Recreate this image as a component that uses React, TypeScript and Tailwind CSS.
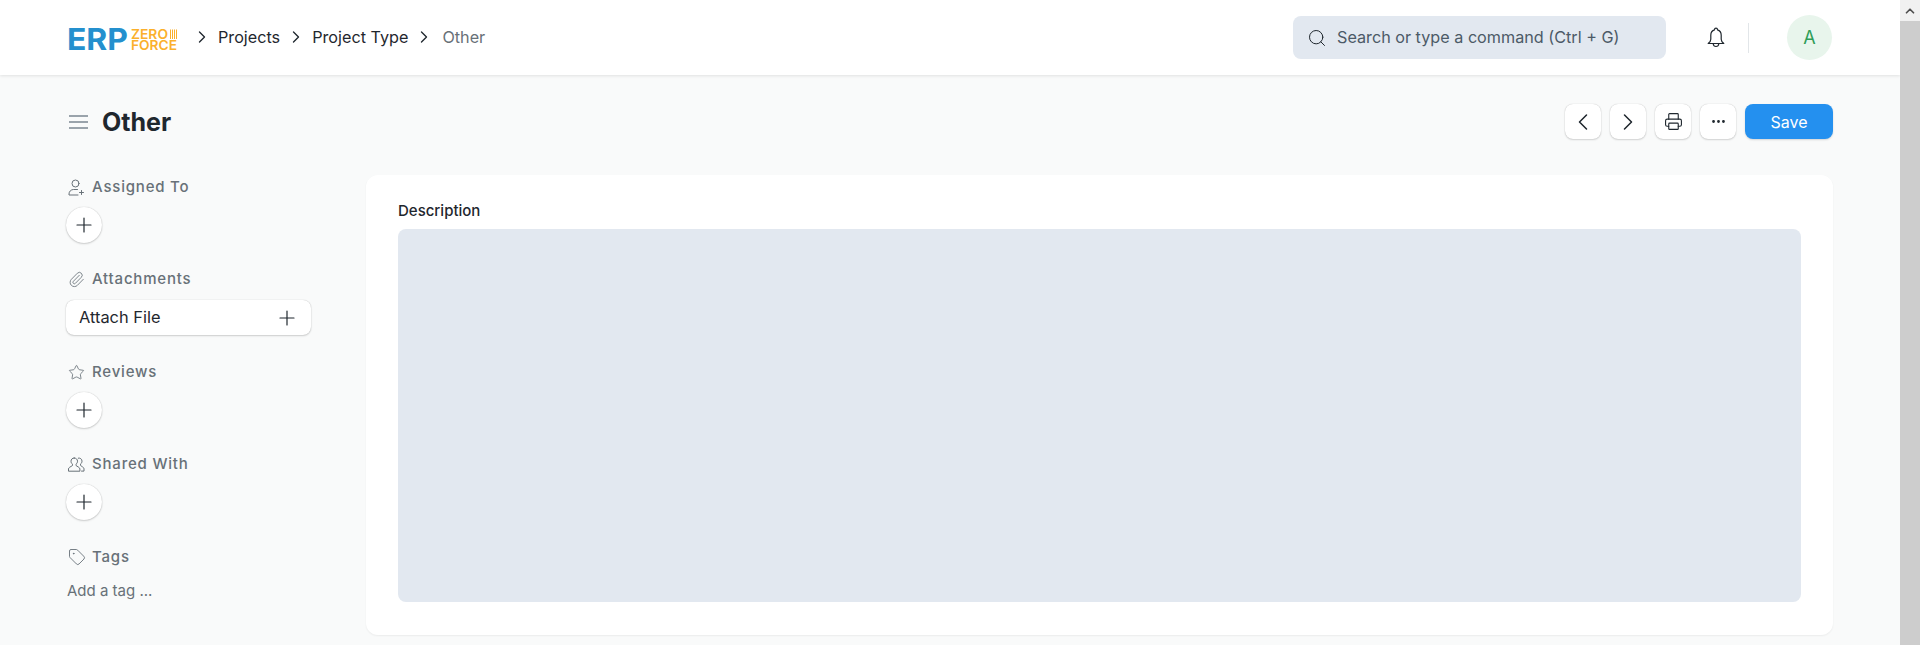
import { ChevronLeft, ChevronRight, Plus, Printer, Search, Ellipsis, Paperclip, Star, Tag, ChevronUp } from "lucide-react";
import type { ReactNode } from "react";

function Crumb() {
  return <ChevronRight size={20} strokeWidth={1.6} className="text-[#1f272e]" />;
}

function Label({ icon, text }: { icon: ReactNode; text: string }) {
  return (
    <div className="flex h-5 items-center text-[#687178]">
      <span className="ml-[2px] flex w-[24px] items-center">{icon}</span>
      <span className="text-[15px] font-medium tracking-[0.8px]">{text}</span>
    </div>
  );
}

function RoundAdd() {
  return (
    <div className="mt-[10px] flex h-9 w-9 items-center justify-center rounded-full bg-white shadow-[0_0_1px_rgba(0,0,0,0.25),0_1px_2px_rgba(0,0,0,0.16)]">
      <Plus size={24} strokeWidth={1.2} className="text-[#1f272e]" />
    </div>
  );
}

function ToolButton({ children }: { children: ReactNode }) {
  return (
    <div className="flex h-[35px] w-9 items-center justify-center rounded-lg bg-white text-[#1f272e] shadow-[0_0_1px_rgba(0,0,0,0.25),0_1px_2px_rgba(0,0,0,0.14)]">
      {children}
    </div>
  );
}

function Logo() {
  return (
    <svg width="108" height="42" viewBox="0 -9 108 42" className="mt-[5px] shrink-0 overflow-visible">
      <text x="-2" y="22" fontSize="30" fontWeight="700" fill="#2490ce" textLength="61" lengthAdjust="spacingAndGlyphs" fontFamily="Inter, sans-serif">ERP</text>
      <text x="62" y="11" fontSize="13.500" fontWeight="600" fill="#fbb02c" textLength="37" lengthAdjust="spacingAndGlyphs" fontFamily="Inter, sans-serif">ZERO</text>
      <text x="62" y="22" fontSize="13.500" fontWeight="600" fill="#fbb02c" textLength="46" lengthAdjust="spacingAndGlyphs" fontFamily="Inter, sans-serif">FORCE</text>
      <g fill="#fbb02c">
        <rect x="101" y="1.500" width="1" height="9.500" />
        <rect x="103" y="1.500" width="1" height="9.500" />
        <rect x="105" y="1.500" width="1" height="9.500" />
        <rect x="107" y="1.500" width="1" height="9.500" />
      </g>
    </svg>
  );
}

function AssignIcon() {
  return (
    <svg width="16" height="17" viewBox="0 0 16 17" fill="none" stroke="currentColor" strokeWidth="1" strokeLinecap="round">
      <circle cx="7.5" cy="4.5" r="3.5" />
      <path d="M9.5 10.5H5.5a4.5 4.5 0 0 0-4.5 4.5v1H10" />
      <path d="M13.5 11.5v4M11.5 13.5h4" />
    </svg>
  );
}

function SharedIcon() {
  return (
    <svg width="17" height="15" viewBox="0 0 17 15" fill="none" stroke="currentColor" strokeWidth="1" strokeLinejoin="round" strokeLinecap="round">
      <path d="M6.200 1c-2 0-3.200 1.400-3.200 3.200 0 1.300.6 2.300 1.500 3v1.300L1.500 10.400c-.6.400-1 .9-1 1.600v2.200h11.400V12c0-.7-.4-1.200-1-1.600L8 8.500V7.200c.9-.7 1.500-1.700 1.500-3C9.500 2.400 8.200 1 6.200 1z" />
      <path d="M10.300 1.100c1.900-.4 3.700 1 3.700 3 0 1.300-.6 2.300-1.500 3v1.300l2.200 1.600c.7.500 1.300 1 1.300 1.800v2.300h-2.500" />
    </svg>
  );
}

function BellIcon() {
  return (
    <svg width="20" height="24" viewBox="0 0 20 24" fill="none" stroke="#1f272e" strokeWidth="1.200" strokeLinejoin="round" strokeLinecap="round" className="ml-[40px]">
      <path d="M8.500 3.800C8.500 2.900 9.100 2.200 10 2.200s1.500.7 1.500 1.600c2.600.7 3.700 2.800 3.700 5.400v4c0 1.700.9 3 2.600 4.300H2.200c1.700-1.300 2.600-2.600 2.600-4.300v-4c0-2.600 1.100-4.700 3.700-5.400z" />
      <path d="M7.200 17.800c.2 1.700 1.300 2.700 2.800 2.700s2.600-1 2.800-2.700" />
    </svg>
  );
}

export default function App() {
  return (
    <div className="flex h-[645px] w-[1920px] overflow-hidden bg-[#f9fafa] font-['Inter','Liberation_Sans',sans-serif]">
      <div className="flex min-w-0 flex-1 flex-col">
        <header className="flex h-[75px] shrink-0 items-center bg-white pl-[69px] pr-[68px] shadow-[0_1px_3px_rgba(0,0,0,0.1)]">
          <Logo />
          <nav className="ml-[15px] flex items-center text-[16.200px] text-[#1f272e]">
            <Crumb />
            <span className="ml-[6px]">Projects</span>
            <span className="ml-[6px]"><Crumb /></span>
            <span className="ml-[6px]">Project Type</span>
            <span className="ml-[6px]"><Crumb /></span>
            <span className="ml-[8px] text-[#687178]">Other</span>
          </nav>
          <div className="ml-auto flex items-center">
            <div className="flex h-[43px] w-[373px] items-center rounded-lg bg-[#e2e8f0] pl-[14px] text-[16.200px] text-[#4c5a67]">
              <Search size={20} strokeWidth={1.2} className="text-[#1f272e]" />
              <span className="ml-[10px]">Search or type a command (Ctrl + G)</span>
            </div>
            <BellIcon />
            <div className="ml-[22px] h-[30px] w-px bg-[#e2e6e9]" />
            <div className="ml-[38px] flex h-[45px] w-[45px] items-center justify-center rounded-full bg-[#e8f5ec] text-[18px] text-[#2f9d58]">A</div>
          </div>
        </header>

        <div className="flex h-[100px] shrink-0 items-start justify-between pl-[69px] pr-[67px] pt-[29px]">
          <div className="flex h-[35px] items-center">
            <div className="flex w-[19px] flex-col gap-[4px]">
              <div className="h-[2px] bg-[#9aa3ab]" />
              <div className="h-[2px] bg-[#9aa3ab]" />
              <div className="h-[2px] bg-[#9aa3ab]" />
            </div>
            <h1 className="ml-[14px] mt-[2px] text-[25px] font-bold text-[#1f272e]">Other</h1>
          </div>
          <div className="flex items-center gap-[9px]">
            <ToolButton><ChevronLeft size={28} strokeWidth={1.3} /></ToolButton>
            <ToolButton><ChevronRight size={28} strokeWidth={1.3} /></ToolButton>
            <ToolButton><Printer size={19} strokeWidth={1.4} /></ToolButton>
            <ToolButton><Ellipsis size={17} strokeWidth={2} /></ToolButton>
            <div className="flex h-[35px] w-[88px] items-center justify-center rounded-lg bg-[#2490ef] text-[16px] text-white shadow-[0_1px_2px_rgba(0,0,0,0.15)]">Save</div>
          </div>
        </div>

        <div className="flex min-h-0 flex-1 pl-[66px] pr-[67px]">
          <aside className="w-[300px] shrink-0 pt-[2px]">
            <Label icon={<AssignIcon />} text="Assigned To" />
            <RoundAdd />
            <div className="mt-[26px]">
              <Label icon={<Paperclip size={17} strokeWidth={1.2} />} text="Attachments" />
              <div className="mt-[11px] flex h-[35px] w-[245px] items-center justify-between rounded-lg bg-white pl-[13px] pr-[12px] text-[16.400px] text-[#1f272e] shadow-[0_0_1px_rgba(0,0,0,0.25),0_1px_2px_rgba(0,0,0,0.16)]">
                <span>Attach File</span>
                <Plus size={24} strokeWidth={1.2} />
              </div>
            </div>
            <div className="mt-[27px]">
              <Label icon={<Star size={17} strokeWidth={1.2} />} text="Reviews" />
              <RoundAdd />
            </div>
            <div className="mt-[26px]">
              <Label icon={<SharedIcon />} text="Shared With" />
              <RoundAdd />
            </div>
            <div className="mt-[27px]">
              <Label icon={<Tag size={18} strokeWidth={1.2} />} text="Tags" />
              <div className="ml-[1px] mt-[13px] text-[15px] text-[#687178]">Add a tag ...</div>
            </div>
          </aside>

          <main className="mb-[10px] flex min-w-0 flex-1 flex-col rounded-xl bg-white px-8 pt-[26px] pb-[33px] shadow-[0_1px_2px_rgba(0,0,0,0.06)]">
            <div className="text-[15px] leading-[20px] font-[450] text-[#1f272e]">Description</div>
            <div className="mt-[8px] flex-1 rounded-lg bg-[#e2e8f0]" />
          </main>
        </div>
      </div>

      <div className="flex w-5 shrink-0 flex-col bg-[#cdcdcd]">
        <div className="flex h-[21px] items-center justify-center bg-[#f1f1f1] pr-px">
          <ChevronUp size={14} strokeWidth={3} className="text-[#505050]" />
        </div>
      </div>
    </div>
  );
}
